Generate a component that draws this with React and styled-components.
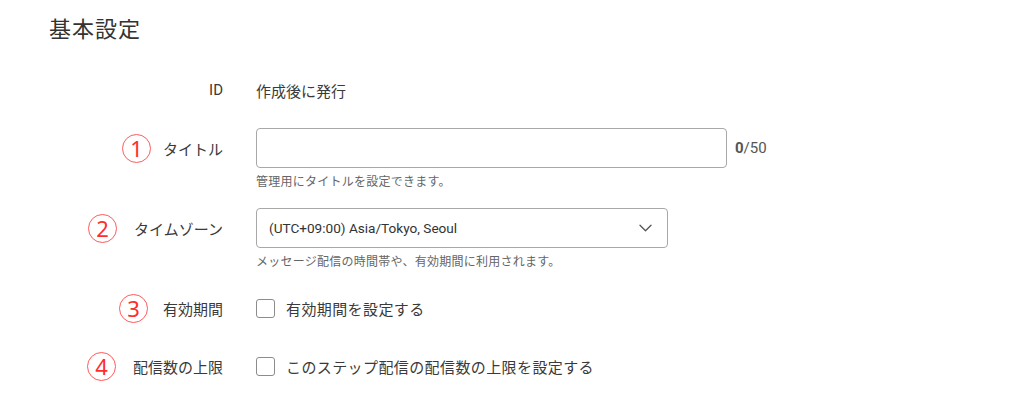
import React from "react";
import styled, { createGlobalStyle } from "styled-components";

const GlobalStyle = createGlobalStyle`
  body {
    margin: 0;
    background: #fff;
    font-family: "Roboto", "Noto Sans CJK JP", sans-serif;
    color: #333;
  }
`;

const Page = styled.section`
  padding: 15px 0 0 49px;
`;

const Heading = styled.h2`
  margin: 0 0 25px;
  font-size: 22px;
  line-height: 30px;
  letter-spacing: 1px;
  font-weight: 400;
  color: #333;
`;

const Rows = styled.div`
  display: flex;
  flex-direction: column;
  gap: 18px;
`;

const Row = styled.div`
  display: grid;
  grid-template-columns: 174px 1fr;
  column-gap: 33px;
  align-items: start;
`;

const Label = styled.div`
  height: 40px;
  display: flex;
  align-items: center;
  justify-content: flex-end;
  gap: ${(p) => p.$gap || 16}px;
  font-size: 15px;
  color: #3a3a3a;
`;

const Badge = styled.span`
  width: 27px;
  height: 27px;
  border: 1.5px solid #ff5a5a;
  border-radius: 50%;
  display: flex;
  align-items: center;
  justify-content: center;
  color: #ff2e2e;
  font-size: 22px;
  line-height: 1;
  font-family: "Noto Sans", sans-serif;
`;

const Field = styled.div`
  display: flex;
  flex-direction: column;
  gap: 6px;
`;

const Line = styled.div`
  height: 40px;
  display: flex;
  align-items: center;
  gap: ${(p) => p.$gap || 8}px;
  font-size: 15px;
  letter-spacing: ${(p) => (p.$wide ? "0.4px" : "0")};
  color: #3a3a3a;
`;

const TextBox = styled.div`
  box-sizing: border-box;
  width: ${(p) => p.$width}px;
  height: 40px;
  border: 1px solid #a8a8a8;
  border-radius: 4px;
  background: #fff;
  display: flex;
  align-items: center;
  justify-content: space-between;
  padding: 0 15px 0 12px;
  font-size: 13.6px;
  color: #333;
`;

const Counter = styled.span`
  font-size: 15px;
  color: #555;
  b {
    font-weight: 700;
  }
`;

const Help = styled.div`
  font-size: 12px;
  line-height: 16px;
  letter-spacing: 0.25px;
  color: #666;
`;

const Check = styled.span`
  box-sizing: border-box;
  width: 19px;
  height: 19px;
  border: 1.5px solid #8c8c8c;
  border-radius: 3px;
  background: #fff;
`;

const Chevron = () => (
  <svg width="13" height="8" viewBox="0 0 13 8" fill="none">
    <path d="M1 1.2l5.5 5.5 5.5-5.5" stroke="#555" strokeWidth="1.3" strokeLinecap="round" strokeLinejoin="round" />
  </svg>
);

const App = () => (
  <>
    <GlobalStyle />
    <Page>
      <Heading>基本設定</Heading>
      <Rows>
        <Row>
          <Label>ID</Label>
          <Line>作成後に発行</Line>
        </Row>
        <Row>
          <Label $gap={12}>
            <Badge>1</Badge>タイトル
          </Label>
          <Field>
            <Line>
              <TextBox $width={471} />
              <Counter>
                <b>0</b>/50
              </Counter>
            </Line>
            <Help>管理用にタイトルを設定できます。</Help>
          </Field>
        </Row>
        <Row>
          <Label $gap={17}>
            <Badge>2</Badge>タイムゾーン
          </Label>
          <Field>
            <TextBox $width={412}>
              (UTC+09:00) Asia/Tokyo, Seoul
              <Chevron />
            </TextBox>
            <Help>メッセージ配信の時間帯や、有効期間に利用されます。</Help>
          </Field>
        </Row>
        <Row>
          <Label $gap={15}>
            <Badge>3</Badge>有効期間
          </Label>
          <Line $gap={11} $wide>
            <Check />
            有効期間を設定する
          </Line>
        </Row>
        <Row>
          <Label $gap={17}>
            <Badge>4</Badge>配信数の上限
          </Label>
          <Line $gap={11} $wide>
            <Check />
            このステップ配信の配信数の上限を設定する
          </Line>
        </Row>
      </Rows>
    </Page>
  </>
);

export default App;
